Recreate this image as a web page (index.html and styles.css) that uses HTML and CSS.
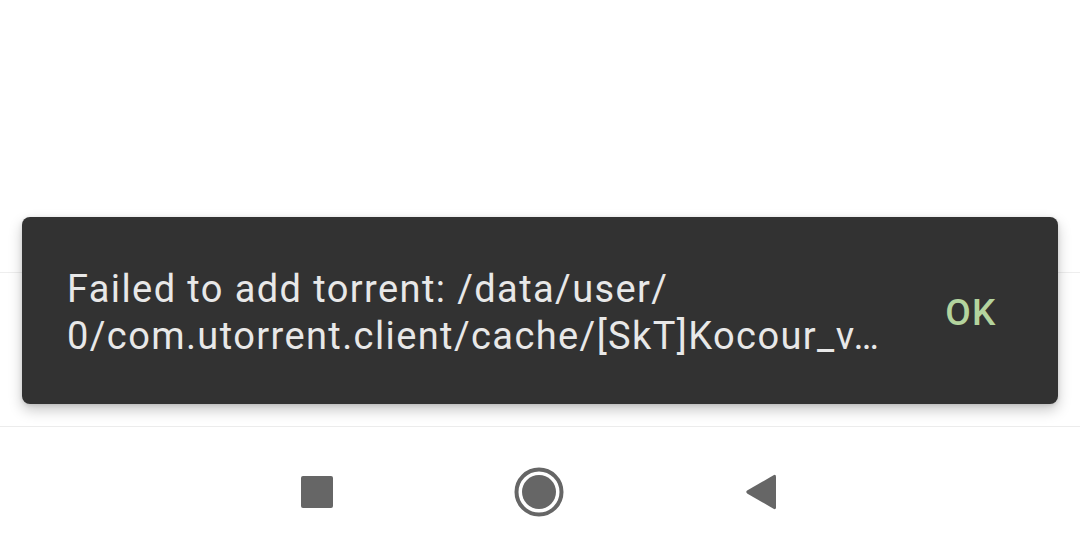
FILE: index.html
```html
<!DOCTYPE html>
<html lang="en">
<head>
  <meta charset="utf-8">
  <title>Snackbar</title>
  <link rel="stylesheet" href="styles.css">
</head>
<body>
<div class="screen">
  <div class="content">
    <div class="header-area"></div>
    <div class="list-row"></div>
  </div>
  <div class="navbar">
    <span class="nav-btn">
      <svg width="32" height="32" viewBox="0 0 32 32"><rect x="0" y="0" width="32" height="32" rx="2" fill="#666"/></svg>
    </span>
    <span class="nav-btn">
      <svg width="50" height="50" viewBox="0 0 50 50">
        <circle cx="25" cy="25" r="22.5" fill="none" stroke="#666" stroke-width="4"/>
        <circle cx="25" cy="25" r="17" fill="#666"/>
      </svg>
    </span>
    <span class="nav-btn">
      <svg width="32" height="38" viewBox="0 0 32 38"><path d="M2.5 17.3 L28.5 2.2 Q31 1 31 3.8 V34.2 Q31 37 28.5 35.8 L2.5 20.7 Q0 19 2.5 17.3 Z" fill="#666"/></svg>
    </span>
  </div>

  <div class="snackbar">
    <div class="snack-text">
      <span class="snack-line">Failed to add torrent: /data/user/</span>
      <span class="snack-line">0/com.utorrent.client/cache/[SkT]Kocour_v…</span>
    </div>
    <button class="snack-action">OK</button>
  </div>
</div>
</body>
</html>
```

FILE: styles.css
```css
html, body {
  margin: 0;
  padding: 0;
  background: #fff;
}
body {
  font-family: Roboto, "Noto Sans", "Liberation Sans", sans-serif;
}
.screen {
  position: relative;
  width: 1080px;
  height: 556px;
  overflow: hidden;
  display: flex;
  flex-direction: column;
}
.content {
  flex: 1;
  display: flex;
  flex-direction: column;
}
.header-area {
  height: 272px;
  border-bottom: 1px solid #eeeeee;
}
.list-row {
  flex: 1;
}
.navbar {
  height: 129px;
  border-top: 1px solid #ececec;
  display: flex;
  align-items: center;
  justify-content: center;
  gap: 158px;
  padding-right: 3px;
}
.nav-btn {
  width: 64px;
  height: 64px;
  display: flex;
  align-items: center;
  justify-content: center;
}
.nav-btn svg {
  display: block;
}

.snackbar {
  position: absolute;
  left: 22px;
  top: 217px;
  width: 1036px;
  height: 187px;
  box-sizing: border-box;
  background: #323232;
  border-radius: 8px;
  box-shadow: 0 6px 14px rgba(0, 0, 0, 0.22), 0 1px 4px rgba(0, 0, 0, 0.12);
  display: flex;
  align-items: center;
  padding: 0 61px 0 45px;
}
.snack-text {
  flex: 1;
  min-width: 0;
  color: #e8e8e8;
  font-size: 38px;
  line-height: 47px;
  letter-spacing: 1.4px;
  padding-top: 4px;
}
.snack-line {
  display: block;
  white-space: nowrap;
  overflow: hidden;
  text-overflow: ellipsis;
}
.snack-action {
  background: none;
  border: 0;
  padding: 0;
  margin: 0;
  font-family: Roboto, "Noto Sans", sans-serif;
  font-weight: 500;
  font-size: 37px;
  letter-spacing: 1.5px;
  color: #b4d49e;
  line-height: 47px;
  margin-top: 4px;
}
```
